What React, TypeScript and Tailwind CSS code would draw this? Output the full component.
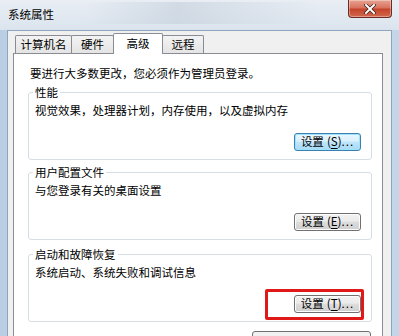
import type { ReactNode } from 'react'

const FONT = { fontFamily: '"Noto Sans CJK SC", "Noto Sans", sans-serif' }

function WinButton({ letter, focused, className = '' }: { letter: string; focused?: boolean; className?: string }) {
  return (
    <button
      className={
        'h-[18px] w-[67px] rounded-[3px] border text-[11.5px] leading-none text-black flex items-center justify-center ' +
        (focused
          ? 'border-[#3c7fb1] shadow-[inset_0_0_0_1px_#9fe3fb] bg-[linear-gradient(#eaf6fd_0%,#d9f0fc_45%,#bee6fd_50%,#a7d9f5_100%)] '
          : 'border-[#707070] shadow-[inset_0_0_0_1px_#fcfcfc] bg-[linear-gradient(#f2f2f2_0%,#ebebeb_45%,#dddddd_50%,#cfcfcf_100%)] ') +
        className
      }
    >
      设置<span className="ml-[3px]">(</span>
      <span className="underline underline-offset-2">{letter}</span>)<span className="tracking-[1px]">...</span>
    </button>
  )
}

function Group({ title, text, letter, focused, className = '', children }: {
  title: string
  text: string
  letter: string
  focused?: boolean
  className?: string
  children?: ReactNode
}) {
  return (
    <div className={'relative w-[344px] h-[68px] rounded-[3px] border border-[#d5dfe5] ' + className}>
      <div className="absolute -top-[9px] left-[4px] bg-white px-[2px] text-[11.5px] leading-[16px] text-black">{title}</div>
      <div className="pl-[6px] pt-[9px] text-[11.5px] leading-[16px] text-black">{text}</div>
      <div className="flex justify-end pr-[10px] pt-[15px]">
        <WinButton letter={letter} focused={focused} />
      </div>
      {children}
    </div>
  )
}

export default function App() {
  return (
    <div className="w-[399px] h-[336px] overflow-hidden bg-[linear-gradient(90deg,#b9cde4,#d3e0ee_20%,#dbe5f0_70%,#c3d5e9)]" style={FONT}>
      {/* title bar */}
      <div className="h-[30px] flex items-start bg-[linear-gradient(180deg,#e9eef4,#dbe4ee)]">
        <div className="pl-[8px] pt-[6px] text-[11.5px] leading-[16px] text-black">系统属性</div>
        <div className="flex-1 h-[22px] mt-[2px] mx-[30px] bg-[linear-gradient(90deg,transparent,#c4cfdb_40%,#cfd8e2_60%,transparent)] opacity-60" />
        <div className="mr-[7px] w-[44px] h-[18px] rounded-b-[4px] border border-t-0 border-[#6e2a20] bg-[linear-gradient(180deg,#e8a493_0%,#d8735f_45%,#c4442b_55%,#d2674f_100%)] flex items-center justify-center shadow-[inset_0_0_0_1px_rgba(255,255,255,0.35)]">
          <svg width="12" height="10" viewBox="0 0 12 10">
            <path d="M2 1 L10 9 M10 1 L2 9" stroke="#3b1d18" strokeWidth="3.4" strokeLinecap="square" />
            <path d="M2 1 L10 9 M10 1 L2 9" stroke="#ffffff" strokeWidth="2" strokeLinecap="square" />
          </svg>
        </div>
      </div>

      {/* dialog body */}
      <div className="ml-[7px] mr-[7px] h-[306px] border-l border-t border-r border-[#8fa4bd] bg-[#f0f0f0] pl-[5px] pr-[8px]">
        {/* tabs */}
        <div className="h-[22px] flex items-end pl-[2px] text-[11.5px] leading-none text-black">
          <div className="h-[18px] w-[57px] flex items-center justify-center border border-b-0 border-[#898c95] rounded-t-[2px] bg-[linear-gradient(#f3f3f3,#e4e4e4)]">计算机名</div>
          <div className="h-[18px] w-[43px] -ml-px flex items-center justify-center border border-b-0 border-[#898c95] rounded-t-[2px] bg-[linear-gradient(#f3f3f3,#e4e4e4)]">硬件</div>
          <div className="relative z-10 h-[21px] w-[50px] -ml-px -mb-px flex items-center justify-center border border-b-0 border-[#898c95] rounded-t-[2px] bg-white">高级</div>
          <div className="h-[18px] w-[42px] -ml-px flex items-center justify-center border border-b-0 border-[#898c95] rounded-t-[2px] bg-[linear-gradient(#f3f3f3,#e4e4e4)]">远程</div>
        </div>

        {/* tab panel */}
        <div className="h-[300px] border border-[#898c95] bg-white pl-[14px]">
          <div className="pt-[11px] pl-[2px] text-[11.5px] leading-[16px] text-black">要进行大多数更改，您必须作为管理员登录。</div>
          <Group className="mt-[11px]" title="性能" text="视觉效果，处理器计划，内存使用，以及虚拟内存" letter="S" focused />
          <Group className="mt-[12px]" title="用户配置文件" text="与您登录有关的桌面设置" letter="E" />
          <Group className="mt-[14px]" title="启动和故障恢复" text="系统启动、系统失败和调试信息" letter="T">
            <div className="absolute left-[236px] top-[34px] w-[99px] h-[31px] border-[3px] border-[#e01818] rounded-[2px]" />
          </Group>
          <div className="flex justify-end w-[343px] mt-[9px]">
            <div className="w-[119px] h-[18px] rounded-[3px] border border-[#707070] bg-[linear-gradient(#f2f2f2,#ebebeb)]" />
          </div>
        </div>
      </div>
    </div>
  )
}
